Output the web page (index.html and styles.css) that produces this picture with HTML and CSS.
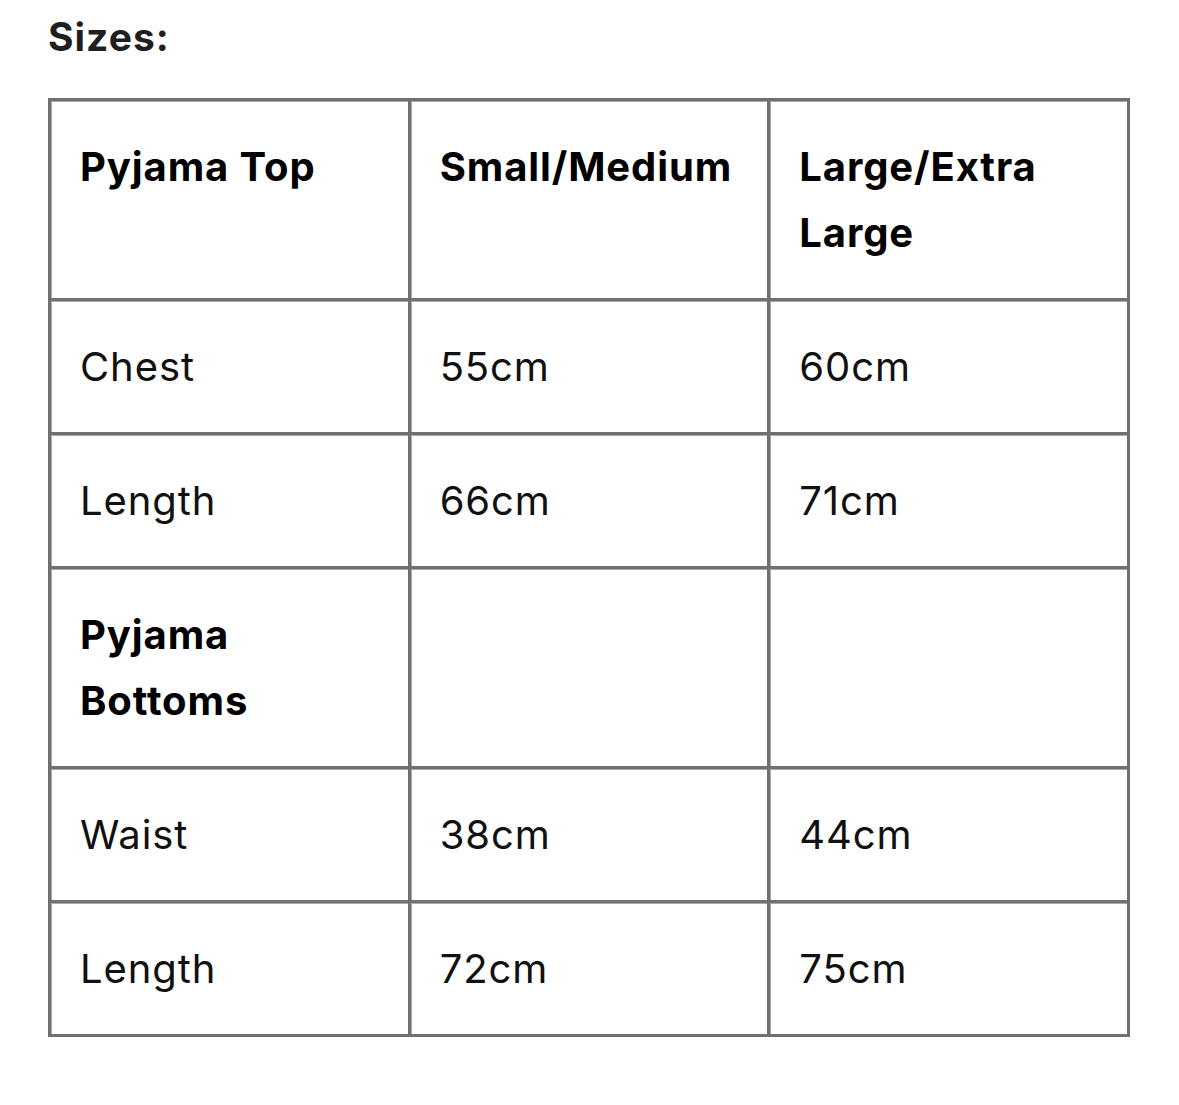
FILE: index.html
```html
<!DOCTYPE html>
<html>
<head>
<meta charset="utf-8">
<link rel="stylesheet" href="styles.css">
</head>
<body>
<h2 class="title">Sizes:</h2>
<table class="sizes">
  <tr><th>Pyjama Top</th><th>Small/Medium</th><th>Large/Extra Large</th></tr>
  <tr><td>Chest</td><td>55cm</td><td>60cm</td></tr>
  <tr><td>Length</td><td>66cm</td><td>71cm</td></tr>
  <tr><th>Pyjama Bottoms</th><td></td><td></td></tr>
  <tr><td>Waist</td><td>38cm</td><td>44cm</td></tr>
  <tr><td>Length</td><td>72cm</td><td>75cm</td></tr>
</table>
</body>
</html>
```
FILE: styles.css
```css
html, body {
  margin: 0;
  padding: 0;
  background: #ffffff;
}
body {
  font-family: Inter, "Noto Sans", sans-serif;
  color: #000;
  padding: 16px 48px;
}
.title {
  margin: 0 0 40px 0;
  font-size: 39px;
  line-height: 42px;
  letter-spacing: 1px;
  font-weight: 700;
  color: #1f1f1f;
}
.sizes {
  border-collapse: collapse;
  table-layout: fixed;
  width: 1082px;
  border: 3px solid #6a6a6a;
}
.sizes th, .sizes td {
  border: 3px solid #707070;
  box-shadow: inset 1px 1px 0 #a8a8a8;
  padding: 33px 28px 32px 29px;
  font-size: 40px;
  line-height: 66px;
  letter-spacing: 0.9px;
  text-align: left;
  vertical-align: top;
}
.sizes th {
  font-weight: 700;
}
.sizes td {
  font-weight: 400;
  color: #111;
}
```
